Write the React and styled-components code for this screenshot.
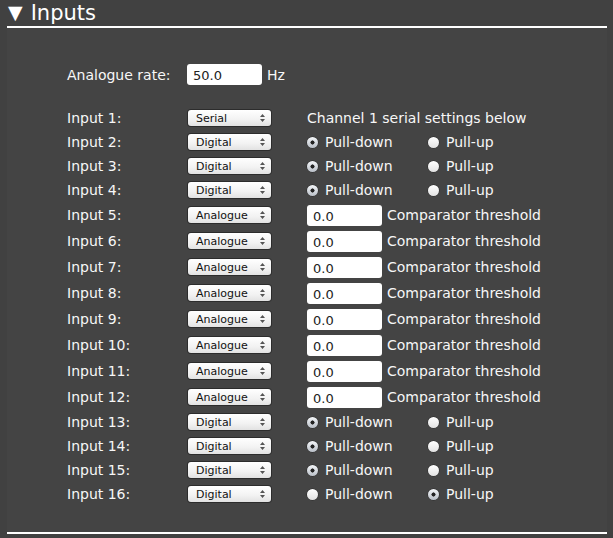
import styled, { createGlobalStyle } from "styled-components";

const GlobalStyle = createGlobalStyle`
  html, body {
    margin: 0;
    padding: 0;
    background: #414141;
  }
  body {
    font-family: "DejaVu Sans", Verdana, sans-serif;
    color: #f7f7f7;
  }
`;

const Page = styled.div`
  width: 613px;
  height: 538px;
  padding: 0 6px 0 7px;
  box-sizing: border-box;
  overflow: hidden;
`;

const Title = styled.h2`
  margin: 0;
  height: 26px;
  display: flex;
  align-items: flex-end;
  font-size: 21px;
  font-weight: normal;
  line-height: 25px;
  color: #ffffff;
  padding-left: 1px;
`;

const Arrow = styled.span`
  font-size: 19px;
  margin-right: 8px;
  position: relative;
  top: -1px;
`;

const Section = styled.div`
  border-top: 2px solid #ffffff;
  border-bottom: 2px solid #ffffff;
  background: #444444;
  padding: 36px 0 26px 60px;
`;

const Grid = styled.div`
  display: grid;
  grid-template-columns: 120px 120px 1fr;
  font-size: 14px;
`;

const Row = styled.div`
  display: contents;
`;

const Cell = styled.div`
  height: ${(p) => p.$h}px;
  display: flex;
  align-items: center;
  white-space: nowrap;
`;

const Spacer = styled.div`
  grid-column: 1 / -1;
  height: 21px;
`;

const TextBox = styled.input`
  width: 75px;
  height: 21px;
  box-sizing: border-box;
  border: none;
  border-radius: 3px;
  background: #ffffff;
  font-family: "DejaVu Sans", Verdana, sans-serif;
  font-size: 13px;
  color: #222;
  padding: 2px 6px 0;
  margin-right: 5px;
  outline: none;
`;

const Select = styled.div`
  width: 83px;
  height: 16px;
  box-sizing: border-box;
  border-radius: 3px;
  background: linear-gradient(#ffffff, #f2f2f2 60%, #e2e2e2);
  box-shadow: 0 0 0 1px rgba(0, 0, 0, 0.35);
  margin-left: 1px;
  display: flex;
  align-items: center;
  justify-content: space-between;
  padding: 0 6px 0 8px;
  font-size: 11px;
  color: #111;
`;

const Radio = styled.span`
  width: 11px;
  height: 11px;
  border-radius: 50%;
  box-sizing: border-box;
  background: ${(p) =>
    p.$on
      ? "radial-gradient(circle, #222 0 1.8px, transparent 2.3px), linear-gradient(#f4f6f9, #b9bfc7)"
      : "linear-gradient(#ffffff, #e2e2e2)"};
  box-shadow: 0 0 0 0.5px rgba(0, 0, 0, 0.4);
  margin-right: 7px;
  flex-shrink: 0;
`;

const RadioItem = styled.span`
  display: inline-flex;
  align-items: center;
  width: ${(p) => p.$w}px;
`;

const UpDown = () => (
  <svg width="5" height="8" viewBox="0 0 5 8">
    <path d="M0 3 L2.5 0 L5 3 Z M0 5 L2.5 8 L5 5 Z" fill="#555" />
  </svg>
);

const inputs = [
  { mode: "Serial" },
  { mode: "Digital", up: false },
  { mode: "Digital", up: false },
  { mode: "Digital", up: false },
  { mode: "Analogue" },
  { mode: "Analogue" },
  { mode: "Analogue" },
  { mode: "Analogue" },
  { mode: "Analogue" },
  { mode: "Analogue" },
  { mode: "Analogue" },
  { mode: "Analogue" },
  { mode: "Digital", up: false },
  { mode: "Digital", up: false },
  { mode: "Digital", up: false },
  { mode: "Digital", up: true },
];

const Settings = ({ input }) => {
  if (input.mode === "Serial") return <>Channel 1 serial settings below</>;
  if (input.mode === "Analogue")
    return (
      <>
        <TextBox readOnly value="0.0" />
        Comparator threshold
      </>
    );
  return (
    <>
      <RadioItem $w={121}>
        <Radio $on={!input.up} />
        Pull-down
      </RadioItem>
      <RadioItem $w={80}>
        <Radio $on={input.up} />
        Pull-up
      </RadioItem>
    </>
  );
};

export default function App() {
  return (
    <Page>
      <GlobalStyle />
      <Title>
        <Arrow>▼</Arrow>Inputs
      </Title>
      <Section>
        <Grid>
          <Row>
            <Cell $h={21}>Analogue rate:</Cell>
            <Cell $h={21} style={{ gridColumn: "2 / 4" }}>
              <TextBox readOnly value="50.0" />
              Hz
            </Cell>
          </Row>
          <Spacer />
          {inputs.map((input, i) => {
            const h = input.mode === "Analogue" ? 26 : 24;
            return (
              <Row key={i}>
                <Cell $h={h}>Input {i + 1}:</Cell>
                <Cell $h={h}>
                  <Select>
                    {input.mode}
                    <UpDown />
                  </Select>
                </Cell>
                <Cell $h={h}>
                  <Settings input={input} />
                </Cell>
              </Row>
            );
          })}
        </Grid>
      </Section>
    </Page>
  );
}
